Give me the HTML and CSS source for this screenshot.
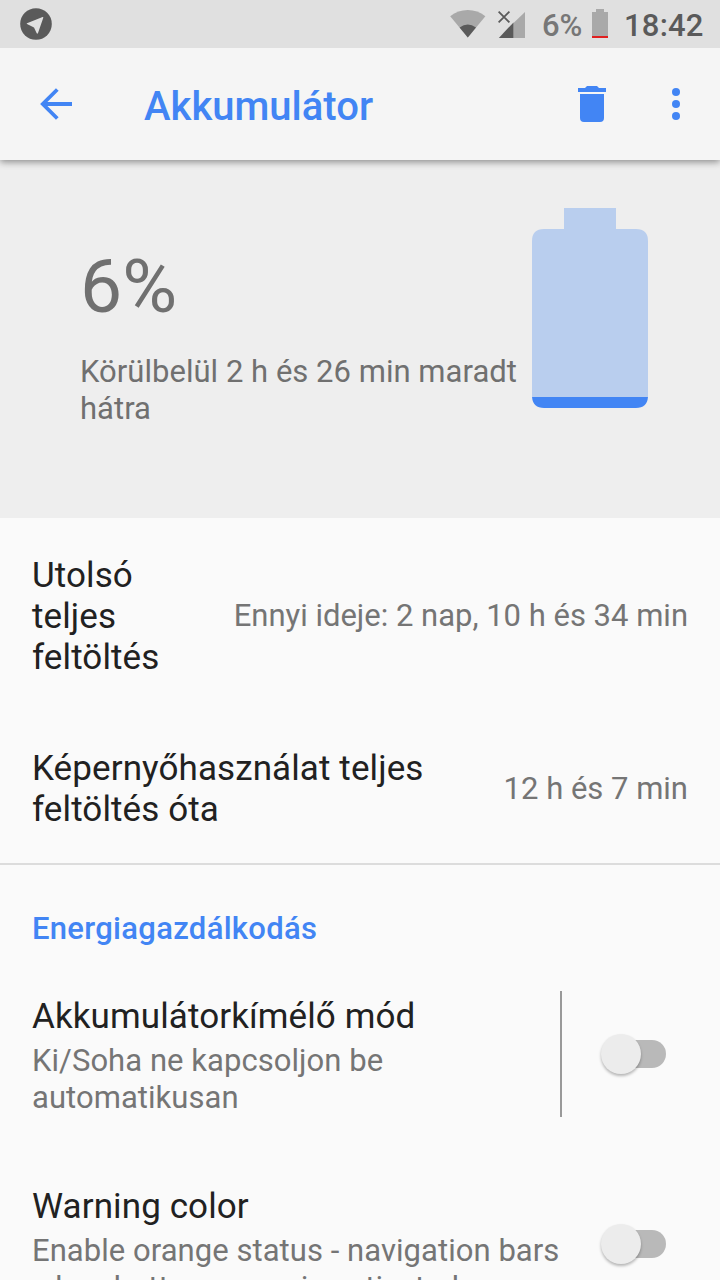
FILE: index.html
```html
<!DOCTYPE html>
<html lang="hu">
<head>
<meta charset="utf-8">
<title>Akkumulátor</title>
<link rel="stylesheet" href="styles.css">
</head>
<body>
<div class="screen">
  <header class="status">
    <svg class="telegram" width="32" height="32" viewBox="0 0 32 32"><circle cx="16" cy="16" r="15.8" fill="#5a5a5a"/><path d="M7 15.2 22.6 9.1q.9-.2.7.7L18 25q-.6 1.2-1.4.1L14 19.4 7 16q-.7-.4 0-.8z" fill="#e0e0e0"/></svg>
    <div class="indicators">
      <svg class="wifi" width="36" height="30" viewBox="0 0 36 30"><path d="M.2 7.2Q8 1 17.8 1t17.6 6.2L17.8 28.4z" fill="#a9a9a9"/><path d="M9.6 18.4q8.2-5.6 16.4 0l-8.2 10z" fill="#5a5a5a"/></svg>
      <svg class="signal" width="28" height="30" viewBox="0 0 28 30"><path d="M15.5 14 27 3v26H15.5z" fill="#a9a9a9"/><path d="M.8 29 15.5 13.4V29z" fill="#5a5a5a"/><path d="m.6 2.6 10.8 10.8M11.4 2.6.6 13.4" stroke="#5a5a5a" stroke-width="1.8"/></svg>
      <span class="level">6%</span>
      <svg class="mini-battery" width="16" height="30" viewBox="0 0 16 30"><path d="M4 0h8v3h4v26H0V3h4z" fill="#a9a9a9"/><path d="M0 27h16v2H0z" fill="#e02020"/></svg>
      <span class="clock">18:42</span>
    </div>
  </header>

  <nav class="appbar">
    <svg class="back" width="32" height="32" viewBox="0 0 32 32" fill="none" stroke="#4285f4"><path d="M32 16H3" stroke-width="4"/><path d="M17.3 1.5 2.8 16l14.5 14.5" stroke-width="3.8"/></svg>
    <h1 class="title">Akkumulátor</h1>
    <svg class="trash" width="28" height="36" viewBox="0 0 28 36" fill="#4285f4"><path d="M0 2h7l2-2h10l2 2h7v4H0zM2 8h24v24q0 4-4 4H6q-4 0-4-4z"/></svg>
    <svg class="more" width="8" height="32" viewBox="0 0 8 32" fill="#4285f4"><circle cx="4" cy="4" r="4"/><circle cx="4" cy="16" r="4"/><circle cx="4" cy="28" r="4"/></svg>
  </nav>

  <section class="summary">
    <div class="remaining">
      <div class="percent">6%</div>
      <p class="estimate">Körülbelül 2 h és 26 min maradt<br>hátra</p>
    </div>
    <svg class="battery" width="116" height="200" viewBox="0 0 116 200"><path d="M32 0h52v21h20q12 0 12 12v156H0V33q0-12 12-12h20z" fill="#b9ceee"/><path d="M0 189h116q-1 11-12 11H12q-11 0-12-11z" fill="#4285f4"/></svg>
  </section>

  <main class="list">
    <div class="row charge">
      <div class="name">Utolsó<br>teljes<br>feltöltés</div>
      <div class="detail since">Ennyi ideje: 2 nap, 10 h és 34 min</div>
    </div>
    <div class="row usage">
      <div class="name">Képernyőhasználat teljes<br>feltöltés óta</div>
      <div class="detail time">12 h és 7 min</div>
    </div>
    <h2 class="category">Energiagazdálkodás</h2>
    <div class="row option">
      <div class="text">
        <div class="name">Akkumulátorkímélő mód</div>
        <div class="detail">Ki/Soha ne kapcsoljon be<br>automatikusan</div>
      </div>
      <div class="control ruled"><span class="switch"><span class="thumb"></span></span></div>
    </div>
    <div class="row option">
      <div class="text">
        <div class="name">Warning color</div>
        <div class="detail">Enable orange status - navigation bars<br>when battery saver is activated</div>
      </div>
      <div class="control"><span class="switch"><span class="thumb"></span></span></div>
    </div>
  </main>
</div>
</body>
</html>
```
FILE: styles.css
```css
* { box-sizing: border-box; }
body { margin: 0; background: #fafafa; font-family: Roboto, sans-serif; }
svg { display: block; flex: none; }
h1, h2, p { margin: 0; }
.screen { width: 720px; height: 1280px; overflow: hidden; display: flex; flex-direction: column; }

.status { height: 48px; flex: none; background: #e0e0e0; display: flex; align-items: center; justify-content: space-between; padding: 0 14px 0 20px; position: relative; z-index: 2; }
.indicators { display: flex; align-items: center; height: 48px; }
.signal { margin-left: 12px; margin-right: 1px; }
.level, .clock { font-weight: 500; white-space: nowrap; line-height: 48px; padding-top: 4px; }
.level { font-size: 31px; color: #777; margin-left: 15px; width: 40px; }
.mini-battery { margin: 0 16px 0 10px; }
.clock { font-size: 31px; color: #5a5a5a; width: 82px; letter-spacing: .2px; }

.appbar { height: 112px; flex: none; background: #f5f5f5; display: flex; align-items: center; padding: 0 40px; box-shadow: 0 2px 7px rgba(0,0,0,.42); position: relative; z-index: 1; }
.title { flex: 1; margin-left: 72px; font-size: 40px; font-weight: 500; color: #4285f4; line-height: 48px; padding-top: 6px; white-space: nowrap; }
.more { margin-left: 66px; }

.summary { height: 358px; flex: none; background: #eee; display: flex; justify-content: space-between; align-items: flex-start; padding: 48px 72px 0 80px; color: #707070; }
.remaining { width: 440px; padding-top: 34px; }
.percent { font-size: 75px; line-height: 88px; }
.estimate { font-size: 31px; letter-spacing: .03px; line-height: 37px; margin-top: 23px; white-space: nowrap; }

.list { flex: none; }
.row { display: flex; align-items: center; justify-content: space-between; padding: 0 32px; }
.name { font-size: 35px; letter-spacing: .1px; line-height: 41px; color: #212121; white-space: nowrap; }
.detail { font-size: 31px; line-height: 37px; color: #757575; white-space: nowrap; }
.since, .time { padding-bottom: 2px; }
.charge { height: 197px; }
.usage { height: 150px; border-bottom: 2px solid #dcdcdc; }
.category { height: 94px; padding: 46px 32px 0; font-size: 31px; letter-spacing: .3px; line-height: 36px; font-weight: 500; color: #4285f4; }
.option { height: 190px; padding-right: 0; }
.option .text { padding-top: 4px; }
.option .detail { margin-top: 5px; letter-spacing: .05px; }
.control { width: 160px; height: 126px; display: flex; align-items: center; padding-left: 44px; }
.ruled { border-left: 2px solid #999; padding-left: 42px; }
.switch { width: 62px; height: 28px; border-radius: 14px; background: #b9b9b9; display: flex; align-items: center; }
.thumb { width: 40px; height: 40px; flex: none; margin-left: -3px; border-radius: 50%; background: #ececec; box-shadow: 0 2px 3px rgba(0,0,0,.28); }
```
